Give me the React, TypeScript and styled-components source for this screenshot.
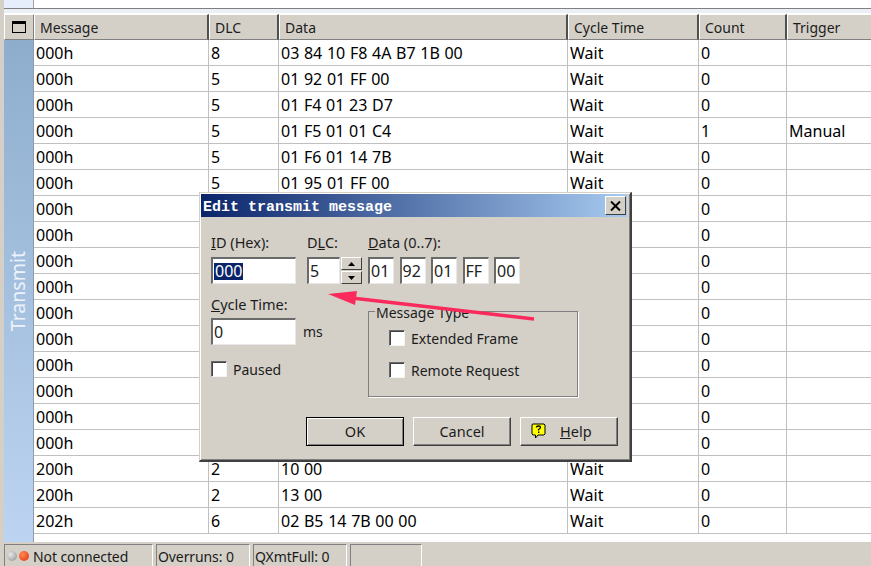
import React from "react";
import styled, { createGlobalStyle } from "styled-components";

const Global = createGlobalStyle`
  html, body { margin: 0; padding: 0; height: 100%; overflow: hidden; background: #d4d0c8; }
  #root { height: 100%; }
  * { box-sizing: border-box; }
`;

const font = `"Noto Sans", "DejaVu Sans", sans-serif`;

const Page = styled.div`
  position: relative;
  width: 871px;
  height: 566px;
  overflow: hidden;
  display: flex;
  flex-direction: column;
  background: #d4d0c8;
  font-family: ${font};
  font-size: 14px;
  color: #000;
`;

const TopStrip = styled.div`
  height: 14px;
  margin-left: 4px;
  flex: none;
  display: flex;
  flex-direction: column;
  background: #fff;
`;
const TopPane = styled.div`
  height: 8px;
  background: #fff;
  display: flex;
`;
const TopRail = styled.div`
  width: 30px;
  background: #e6eefb;
  border-right: 1px solid #a0a0a0;
`;
const TopLine = styled.div`
  height: 1px;
  background: #808080;
`;
const TopGap = styled.div`
  height: 5px;
  background: #eceff6;
  border-bottom: 1px solid #fff;
`;

const Grid = styled.div`
  flex: 1;
  display: flex;
  flex-direction: column;
  margin-left: 4px;
  min-height: 0;
`;
const HeaderRow = styled.div`
  display: flex;
  height: 26px;
  flex: none;
`;
const HeaderCell = styled.div<{ $w: number }>`
  width: ${(p) => p.$w}px;
  flex: none;
  height: 26px;
  padding: 0 0 0 5px;
  line-height: 25px;
  background: #d4d0c8;
  color: #1c1c1c;
  white-space: nowrap;
  border-top: 1px solid #fff;
  border-left: 1px solid #fff;
  border-right: 2px solid #505050;
  border-bottom: 1px solid #808080;
`;
const CornerCell = styled.div`
  width: 30px;
  flex: none;
  height: 26px;
  background: #d4d0c8;
  border-top: 1px solid #fff;
  border-left: 1px solid #fff;
  border-right: 1px solid #808080;
  border-bottom: 1px solid #808080;
  display: flex;
  align-items: center;
  justify-content: center;
`;
const Body = styled.div`
  flex: 1;
  display: flex;
  min-height: 0;
`;
const Rail = styled.div`
  width: 30px;
  flex: none;
  background: linear-gradient(180deg, #8eadcd 0%, #bcd4f1 100%);
  border-right: 1px solid #8b9bb0;
  padding-right: 2px;
  display: flex;
  align-items: center;
  justify-content: center;
`;
const RailLabel = styled.span`
  writing-mode: vertical-rl;
  transform: rotate(180deg);
  color: #eef3fa;
  font-size: 19.5px;
`;
const Rows = styled.div`
  flex: 1;
  background: #fff;
  min-width: 0;
`;
const Row = styled.div`
  display: flex;
  height: 26px;
  border-bottom: 1px solid #c0c0c0;
`;
const Cell = styled.div<{ $w: number }>`
  width: ${(p) => p.$w}px;
  flex: none;
  padding-left: 2px;
  line-height: 27px;
  font-size: 16px;
  word-spacing: 0.5px;
  white-space: nowrap;
  border-right: 1px solid #c0c0c0;
`;

const StatusBar = styled.div`
  height: 24px;
  flex: none;
  display: flex;
  gap: 3px;
  padding: 2px 0 0 4px;
`;
const Panel = styled.div<{ $w: number }>`
  width: ${(p) => p.$w}px;
  flex: none;
  height: 22px;
  display: flex;
  align-items: center;
  padding: 1px 1px 0;
  border-top: 1px solid #808080;
  border-left: 1px solid #808080;
  border-right: 1px solid #fff;
  color: #1a1a1a;
  white-space: nowrap;
  letter-spacing: -0.1px;
`;
const Leds = styled.div`
  display: flex;
  gap: 2px;
  padding: 0 4px 0 1px;
`;
const Led = styled.span<{ $c: string }>`
  width: 10px;
  height: 10px;
  border-radius: 50%;
  flex: none;
  background: ${(p) => p.$c};
`;

const Dialog = styled.div`
  position: absolute;
  left: 199px;
  top: 192px;
  width: 433px;
  height: 270px;
  background: #d4d0c8;
  border-top: 1px solid #d4d0c8;
  border-left: 1px solid #d4d0c8;
  border-right: 2px solid #404040;
  border-bottom: 2px solid #404040;
  box-shadow: inset 1px 1px 0 #fff, inset -1px -1px 0 #808080;
  padding: 1px 3px 0 1px;
  display: flex;
  flex-direction: column;
`;
const TitleBar = styled.div`
  height: 23px;
  flex: none;
  display: flex;
  align-items: center;
  justify-content: space-between;
  padding: 0 1px 0 2px;
  background: linear-gradient(90deg, #0a246a 0%, #a6caf0 100%);
`;
const TitleText = styled.span`
  font-family: "Liberation Mono", monospace;
  font-weight: bold;
  font-size: 15px;
  line-height: 17px;
  padding-top: 4px;
  color: #fff;
  white-space: nowrap;
`;
const CloseBtn = styled.div`
  width: 21px;
  height: 19px;
  background: #d4d0c8;
  border: 1px solid;
  border-color: #fff #404040 #404040 #fff;
  display: flex;
  align-items: center;
  justify-content: center;
`;
const Form = styled.div`
  flex: 1;
  display: flex;
  flex-direction: column;
  padding: 16px 11px 0 10px;
  color: #1c1c1c;
  font-size: 14px;
`;
const TopFields = styled.div`
  display: flex;
  align-items: flex-start;
`;
const Field = styled.div<{ $w: number }>`
  display: flex;
  flex-direction: column;
  width: ${(p) => p.$w}px;
  flex: none;
`;
const Label = styled.label<{ $lh?: number }>`
  height: 24px;
  line-height: ${(p) => p.$lh ?? 20}px;
  font-size: 14.5px;
  white-space: nowrap;
`;
const U = styled.u``;
const Sunken = styled.div<{ $w: number }>`
  width: ${(p) => p.$w}px;
  height: 27px;
  flex: none;
  background: #fff;
  border-top: 2px solid #6a6a6a;
  border-left: 2px solid #6a6a6a;
  border-right: 1px solid #e8e8e8;
  border-bottom: 1px solid #e8e8e8;
  padding-left: 1px;
  font-size: 16px;
  line-height: 24px;
  color: #222;
  display: flex;
  align-items: center;
`;
const Selected = styled.span`
  background: #0a246a;
  color: #fff;
  line-height: 17px;
  padding: 0 1px;
`;
const SpinRow = styled.div`
  display: flex;
`;
const Spin = styled.div`
  width: 21px;
  margin-left: 1px;
  display: flex;
  flex-direction: column;
  gap: 1px;
`;
const SpinBtn = styled.div`
  flex: 1;
  background: #d4d0c8;
  border: 1px solid;
  border-color: #fff #404040 #404040 #fff;
  display: flex;
  align-items: center;
  justify-content: center;
`;
const DataInputs = styled.div`
  display: flex;
  gap: 5.5px;
`;
const Middle = styled.div`
  display: flex;
  margin-top: 10px;
  height: 103px;
`;
const LeftCol = styled.div`
  width: 157px;
  flex: none;
  display: flex;
  flex-direction: column;
`;
const CycleRow = styled.div`
  display: flex;
  align-items: center;
  gap: 7px;
`;
const CheckLine = styled.div<{ $mt?: number }>`
  display: flex;
  align-items: center;
  gap: 6px;
  margin-top: ${(p) => p.$mt ?? 0}px;
  height: 18px;
  white-space: nowrap;
`;
const Check = styled.span`
  width: 16px;
  height: 16px;
  flex: none;
  background: #fff;
  border-top: 1px solid #6a6a6a;
  border-left: 1px solid #6a6a6a;
  border-right: 1px solid #f4f4f4;
  border-bottom: 1px solid #f4f4f4;
  box-shadow: inset 1px 1px 0 #404040;
`;
const GroupBox = styled.fieldset`
  width: 210px;
  height: 86px;
  margin: 17px 0 0 0;
  padding: 17px 0 0 20px;
  border: 1px solid #808080;
  box-shadow: 1px 1px 0 #fff;
  display: flex;
  flex-direction: column;
  position: relative;
`;
const Legend = styled.div`
  position: absolute;
  left: 6px;
  top: -8px;
  padding: 0 1px;
  line-height: 18px;
  background: #d4d0c8;
`;
const Buttons = styled.div`
  display: flex;
  gap: 9px;
  padding-left: 95px;
  margin-top: 20px;
`;
const Btn = styled.div<{ $def?: boolean }>`
  width: 98px;
  height: 29px;
  flex: none;
  display: flex;
  align-items: center;
  justify-content: center;
  padding-bottom: 1px;
  background: #d4d0c8;
  border: 1px solid;
  border-color: ${(p) => (p.$def ? "#000" : "#fff #404040 #404040 #fff")};
  box-shadow: ${(p) => (p.$def ? "inset 1px 1px 0 #fff, inset -1px -1px 0 #808080" : "inset -1px -1px 0 #808080")};
  color: #1c1c1c;
  font-size: 14.5px;
`;
const HelpBtn = styled(Btn)`
  justify-content: flex-start;
  padding-left: 10px;
  gap: 14px;
`;
const Arrow = styled.svg`
  position: absolute;
  left: 0;
  top: 0;
  pointer-events: none;
`;

const cols = [175, 70, 289, 131, 88, 120];
const headers = ["Message", "DLC", "Data", "Cycle Time", "Count", "Trigger"];
const row = (m: string, d: string, dt: string, c = "0", t = "") => [m, d, dt, "Wait", c, t];
const data: string[][] = [
  row("000h", "8", "03 84 10 F8 4A B7 1B 00"),
  row("000h", "5", "01 92 01 FF 00"),
  row("000h", "5", "01 F4 01 23 D7"),
  row("000h", "5", "01 F5 01 01 C4", "1", "Manual"),
  row("000h", "5", "01 F6 01 14 7B"),
  row("000h", "5", "01 95 01 FF 00"),
  ...Array.from({ length: 10 }, () => ["000h", "", "", "", "0", ""]),
  row("200h", "2", "10 00"),
  row("200h", "2", "13 00"),
  row("202h", "6", "02 B5 14 7B 00 00"),
];

export default function App() {
  return (
    <Page>
      <Global />
      <TopStrip>
        <TopPane>
          <TopRail />
        </TopPane>
        <TopLine />
        <TopGap />
      </TopStrip>
      <Grid>
        <HeaderRow>
          <CornerCell>
            <svg width="14" height="12" viewBox="0 0 14 12">
              <rect x="0.5" y="0.5" width="13" height="11" fill="#d4d0c8" stroke="#000" />
              <rect x="0" y="0" width="14" height="3" fill="#000" />
            </svg>
          </CornerCell>
          {headers.map((h, i) => (
            <HeaderCell key={h} $w={cols[i]}>{h}</HeaderCell>
          ))}
        </HeaderRow>
        <Body>
          <Rail>
            <RailLabel>Transmit</RailLabel>
          </Rail>
          <Rows>
            {data.map((r, i) => (
              <Row key={i}>
                {r.map((c, j) => (
                  <Cell key={j} $w={cols[j]}>{c}</Cell>
                ))}
              </Row>
            ))}
          </Rows>
        </Body>
      </Grid>
      <StatusBar>
        <Panel $w={149}>
          <Leds>
            <Led $c="radial-gradient(circle at 35% 35%, #e8e8e8, #8e8e8e)" />
            <Led $c="radial-gradient(circle at 35% 35%, #ff8a50, #e03010)" />
          </Leds>
          <span>Not connected</span>
        </Panel>
        <Panel $w={94}>Overruns: 0</Panel>
        <Panel $w={94}>QXmtFull: 0</Panel>
        <Panel $w={72} />
      </StatusBar>

      <Dialog>
        <TitleBar>
          <TitleText>Edit transmit message</TitleText>
          <CloseBtn>
            <svg width="11" height="10" viewBox="0 0 11 10">
              <path d="M1 0.5 L10 9.5 M10 0.5 L1 9.5" stroke="#000" strokeWidth="2" />
            </svg>
          </CloseBtn>
        </TitleBar>
        <Form>
          <TopFields>
            <Field $w={96}>
              <Label $lh={18}><U>I</U>D (Hex):</Label>
              <Sunken $w={85}><Selected>000</Selected></Sunken>
            </Field>
            <Field $w={61}>
              <Label $lh={18}>D<U>L</U>C:</Label>
              <SpinRow>
                <Sunken $w={33}>5</Sunken>
                <Spin>
                  <SpinBtn>
                    <svg width="7" height="4" viewBox="0 0 7 4"><path d="M3.5 0 L7 4 L0 4 Z" fill="#000" /></svg>
                  </SpinBtn>
                  <SpinBtn>
                    <svg width="7" height="4" viewBox="0 0 7 4"><path d="M0 0 L7 0 L3.5 4 Z" fill="#000" /></svg>
                  </SpinBtn>
                </Spin>
              </SpinRow>
            </Field>
            <Field $w={160}>
              <Label $lh={18}><U>D</U>ata (0..7):</Label>
              <DataInputs>
                {["01", "92", "01", "FF", "00"].map((v, i) => (
                  <Sunken key={i} $w={26}>{v}</Sunken>
                ))}
              </DataInputs>
            </Field>
          </TopFields>
          <Middle>
            <LeftCol>
              <Label><U>C</U>ycle Time:</Label>
              <CycleRow>
                <Sunken $w={85}>0</Sunken>
                <span>ms</span>
              </CycleRow>
              <CheckLine $mt={15}>
                <Check />
                <span>Paused</span>
              </CheckLine>
            </LeftCol>
            <GroupBox>
              <Legend>Message Type</Legend>
              <CheckLine><Check /><span>Extended Frame</span></CheckLine>
              <CheckLine $mt={14}><Check /><span>Remote Request</span></CheckLine>
            </GroupBox>
          </Middle>
          <Buttons>
            <Btn $def>OK</Btn>
            <Btn>Cancel</Btn>
            <HelpBtn>
              <svg width="15" height="16" viewBox="0 0 15 16">
                <path d="M1.5 1 H13 L14 2 V11 L13 12 H7 L4.5 15 V12 H2 L1 11 V2 Z" fill="#ffff00" stroke="#000" />
                <path d="M5.5 4.5 Q5.5 3 7.5 3 Q9.5 3 9.5 4.5 Q9.5 5.5 7.5 6.5 V7.5" fill="none" stroke="#000" strokeWidth="1.3" />
                <rect x="7" y="8.5" width="1.4" height="1.4" fill="#000" />
              </svg>
              <span><U>H</U>elp</span>
            </HelpBtn>
          </Buttons>
        </Form>
      </Dialog>

      <Arrow width="871" height="566" viewBox="0 0 871 566">
        <path d="M352 298 L534 319" stroke="#fb2a5c" strokeWidth="3.5" fill="none" />
        <path d="M328 294 L357 291 L355 305 Z" fill="#fb2a5c" />
      </Arrow>
    </Page>
  );
}
